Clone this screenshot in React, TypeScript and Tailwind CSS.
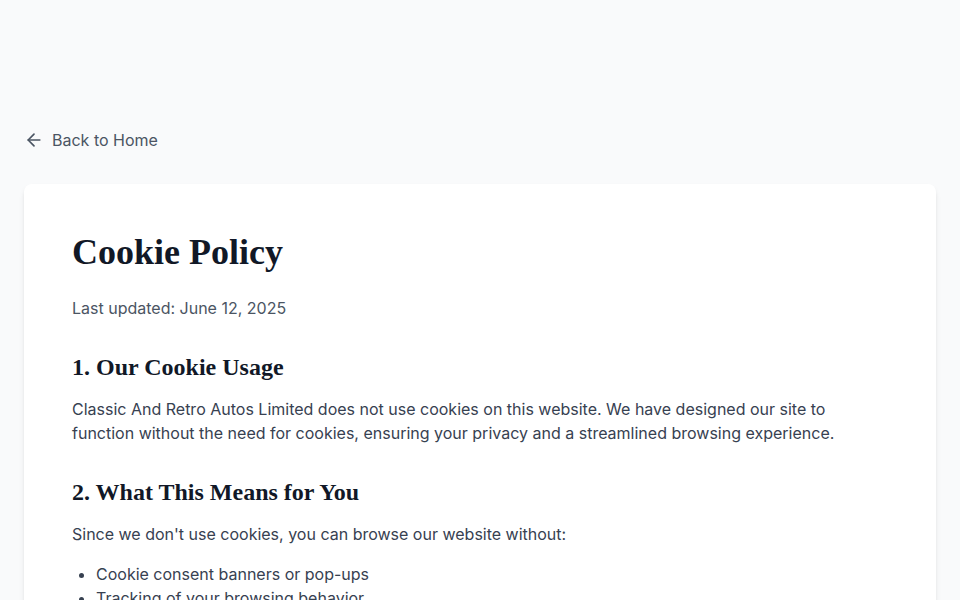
import React from "react";

export default function App() {
  const serif = { fontFamily: '"Liberation Serif", "DejaVu Serif", serif' };
  return (
    <div
      className="min-h-screen bg-[#f9fafb] px-6 pt-[128px] pb-12"
      style={{ fontFamily: 'Inter, "Liberation Sans", sans-serif' }}
    >
      <a href="#" className="mb-8 flex items-center gap-2 text-base leading-6 text-[#4b5563]">
        <svg width="20" height="20" viewBox="0 0 24 24" fill="none" stroke="currentColor" strokeWidth="2" strokeLinecap="round" strokeLinejoin="round">
          <path d="m12 19-7-7 7-7" />
          <path d="M19 12H5" />
        </svg>
        <span>Back to Home</span>
      </a>
      <div className="rounded-lg bg-white p-12 shadow-md">
        <h1 className="mb-6 text-4xl leading-10 font-bold text-[#111827]" style={serif}>
          Cookie Policy
        </h1>
        <p className="mb-[31px] text-base leading-6 text-[#4b5563]">Last updated: June 12, 2025</p>

        <section className="mb-[31px]">
          <h2 className="mb-3.5 text-2xl leading-8 font-bold text-[#111827]" style={serif}>
            1. Our Cookie Usage
          </h2>
          <p className="text-base leading-6 text-[#374151]">
            Classic And Retro Autos Limited does not use cookies on this website. We have designed our site to
            function without the need for cookies, ensuring your privacy and a streamlined browsing experience.
          </p>
        </section>

        <section className="mb-8">
          <h2 className="mb-3.5 text-2xl leading-8 font-bold text-[#111827]" style={serif}>
            2. What This Means for You
          </h2>
          <p className="mb-4 text-base leading-6 text-[#374151]">
            Since we don't use cookies, you can browse our website without:
          </p>
          <ul className="list-disc pl-6 text-base leading-6 text-[#374151]">
            <li>Cookie consent banners or pop-ups</li>
            <li>Tracking of your browsing behavior</li>
            <li>Third-party advertising cookies</li>
          </ul>
        </section>
      </div>
    </div>
  );
}
